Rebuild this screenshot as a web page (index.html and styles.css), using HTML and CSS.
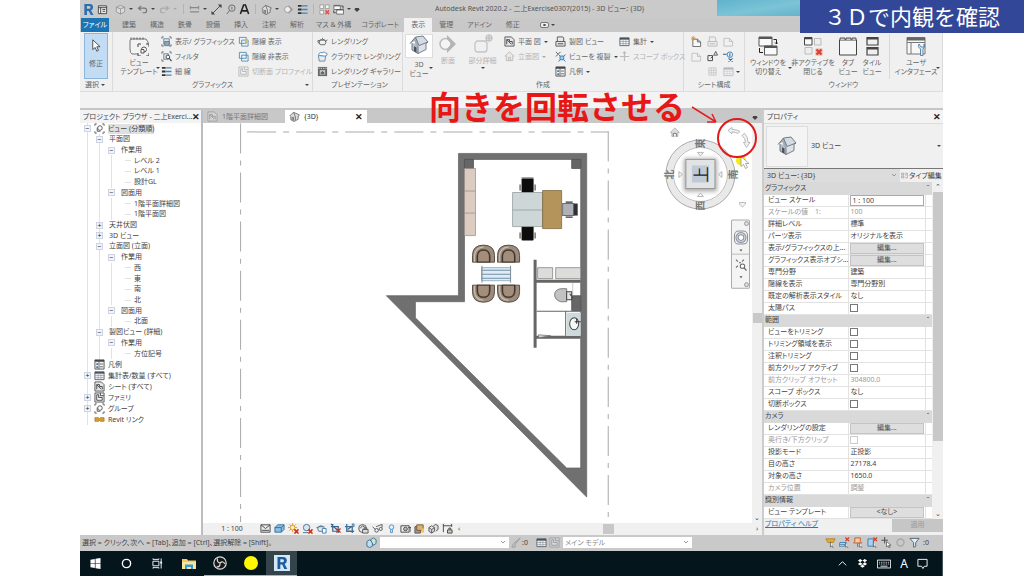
FILE: index.html
```html
<!DOCTYPE html>
<html lang="ja">
<head>
  <meta charset="UTF-8">
  <title>Autodesk Revit 2020.2 - 3D ビュー</title>
  <link rel="stylesheet" href="styles.css">
</head>
<body>

<svg class="defs" aria-hidden="true">
  <symbol id="i-r" viewBox="0 0 12 12"><path d="M1.500 12V0h6Q11 0 11 3.800q0 2.400-2.300 3.200L11.500 12h-3L6.200 7.500H4.300V12zM4.300 2.300v3h2.300q1.600 0 1.600-1.500T6.600 2.300z" fill="#2c6fae"/></symbol>
  <symbol id="i-list" viewBox="0 0 12 12"><path d="M1.500 2h9v8.500h-9zM1.500 4h9M4 4v6.500M6 6h3M6 8h3" fill="#eee" stroke="#444"/></symbol>
  <symbol id="i-cube" viewBox="0 0 12 12"><path d="M1.500 3.500 6 1.500l4.500 2v5L6 11 1.500 8.500zM1.500 3.500 6 5.500l4.500-2M6 5.500V11" fill="#ddd" stroke="#888" stroke-width=".8"/></symbol>
  <symbol id="i-solid" viewBox="0 0 12 12"><path d="M1 5l3-2 3 2v4l-3 2-3-2zM1 5l3 2 3-2M4 7v4M6 3l2.500-1.500L11 3v4L8.500 9" fill="#ddd" stroke="#555"/></symbol>
  <symbol id="i-undo" viewBox="0 0 12 12"><path d="M4.500 2 1.500 4.500l3 2.500M1.500 4.500H8q2.500 0 2.500 2.500T8 9.500H6" fill="none" stroke="#777" stroke-width="1.200"/></symbol>
  <symbol id="i-redo" viewBox="0 0 12 12"><path d="M7.500 2l3 2.500-3 2.500M10.500 4.500H4Q1.500 4.500 1.500 7T4 9.500h2" fill="none" stroke="#aaa" stroke-width="1.200"/></symbol>
  <symbol id="i-measure" viewBox="0 0 12 12"><path d="M1 4h10M1 8.500h10" stroke="#888" stroke-width="1.400" fill="none"/><path d="M1.500 2v4M10.500 2v4" stroke="#888"/></symbol>
  <symbol id="i-constrain" viewBox="0 0 12 12"><path d="M1 3h10M1.500 1v9M10.500 1v3" stroke="#444" fill="none"/><path d="M6 7.500h5V11H6zM7.500 7V5.500h2V7" fill="#ccc" stroke="#444"/></symbol>
  <symbol id="i-dim" viewBox="0 0 12 12"><path d="M2 10l8-8" stroke="#444"/><path d="M.500 11.500V7.500l4 4zM11.500.500v4l-4-4z" fill="#444"/></symbol>
  <symbol id="i-tag" viewBox="0 0 12 12"><circle cx="7.500" cy="4.500" r="3.500" fill="none" stroke="#666"/><path d="M5 7l-3 4M7.500 3v3" stroke="#666"/></symbol>
  <symbol id="i-text" viewBox="0 0 12 12"><path d="M1.500 11 5 1h2l3.500 10M3.500 7.500h5" fill="none" stroke="#222" stroke-width="1.700"/></symbol>
  <symbol id="i-house" viewBox="0 0 12 12"><path d="M1 5 5 1.500 11 4v1l-1 .500V9l-4.500 2.500L2 9.500V6z" fill="#ddd" stroke="#555" stroke-width=".8"/><path d="M5 1.500 7 6.500V10M3.500 10V7h1.500v3.500" fill="none" stroke="#555" stroke-width=".8"/></symbol>
  <symbol id="i-section" viewBox="0 0 12 12"><circle cx="5" cy="6" r="3.300" fill="#eee" stroke="#999"/><path d="M6 1l5 5-5 5V9.500L9 6 6 2.500z" fill="#999"/></symbol>
  <symbol id="i-lines" viewBox="0 0 12 12"><path d="M1 2h4M1 6h4M1 10h4" stroke="#333" stroke-width="2"/><path d="M5.500 2h6M5.500 6h6M5.500 10h6" stroke="#4585b5" stroke-width="1.500"/></symbol>
  <symbol id="i-closex" viewBox="0 0 12 12"><path d="M1 1h4v4H1zM7 1h4v4H7zM1 7h4v4H1z" fill="#f4f4f4" stroke="#888" stroke-width=".7"/><path d="M7 7l4 4M11 7l-4 4" stroke="#dd5a48" stroke-width="1.700"/></symbol>
  <symbol id="i-switch" viewBox="0 0 12 12"><path d="M1 1.500h7V6H1zM4 6h7.500v5H4z" fill="#fafafa" stroke="#555" stroke-width=".8"/><path d="M1 2h7M4 6.500h7.500" stroke="#555"/><path d="M9 2.200h2V5M.800 7v2.500H3" fill="none" stroke="#222" stroke-width=".8"/></symbol>
  <symbol id="i-filter" viewBox="0 0 12 12"><path d="M1 3V1h2M9 1h2v2M11 9v2H9M3 11H1V9" fill="none" stroke="#666"/><path d="M3 3h6v6H3z" fill="#dbe4ec" stroke="#4d6c86" stroke-width=".8"/><path d="M4 6h5v4.500H4z" fill="#8fa9bd" stroke="#4d6c86" stroke-width=".8"/></symbol>
  <symbol id="i-find" viewBox="0 0 12 12"><path d="M1 3V1h2M9 1h2v2M3 11H1V9" fill="none" stroke="#666"/><path d="M3 3h5v6H3z" fill="#dbe4ec" stroke="#4d6c86" stroke-width=".8"/><circle cx="7.500" cy="6.500" r="2" fill="#fff" stroke="#444"/><path d="M9 8l2.500 3" stroke="#444" stroke-width="1.300"/></symbol>
  <symbol id="i-layers" viewBox="0 0 12 12"><path d="M1.500 1.500H9V8H1.500zM4 4.500h7V11H4z" fill="#eef4f8" stroke="#4682ae" stroke-width=".9"/><path d="M7.500 3.500h3.500v3.500H7.500z" fill="#e7b951"/></symbol>
  <symbol id="i-layers2" viewBox="0 0 12 12"><path d="M1.500 1.500H9V8H1.500zM4 4.500h7V11H4z" fill="#eef4f8" stroke="#4682ae" stroke-width=".9"/></symbol>
  <symbol id="i-teapot" viewBox="0 0 12 12"><path d="M3 4.500h6q1.500 3-.500 5h-5Q1.500 7.500 3 4.500zM3 5H1q-.500 3 2 3M9 6.500 11.500 4M3.500 4.500q2.500-2 5 0M5.500 2.500h1" fill="none" stroke="#555" stroke-width=".9"/></symbol>
  <symbol id="i-cloud" viewBox="0 0 12 12"><path d="M1.500 5h8l-1 6h-6z" fill="#e6eef5" stroke="#5a7893" stroke-width=".9"/><path d="M3 5Q1 4 2.500 2.500 4 1 5.500 2 8 0 9 2q2.500 0 2 2t-3 1.500z" fill="#fff" stroke="#3d7cb0" stroke-width=".9"/></symbol>
  <symbol id="i-gallery" viewBox="0 0 12 12"><path d="M1 1h10v10H1z" fill="#666"/><path d="M1.500 2.500h9" stroke="#ddd" stroke-dasharray="1.500 1"/><path d="M3 4.500h6v5H3z" fill="#ccc"/><path d="M4 9V7l2-1.500L8 7v2z" fill="#666"/></symbol>
  <symbol id="i-plan" viewBox="0 0 12 12"><path d="M1 1h7l3 3v7H1z" fill="#e4e7ea" stroke="#555"/><path d="M3 9V4h3v2h3v3M3 4l5 5" fill="none" stroke="#444"/></symbol>
  <symbol id="i-elev" viewBox="0 0 12 12"><path d="M6 1l5 4.500H9.500v5h-7v-5H1z" fill="#e8e8e8" stroke="#bbb"/><path d="M5 10.500V7h2v3.500" stroke="#bbb" fill="none"/></symbol>
  <symbol id="i-draft" viewBox="0 0 12 12"><path d="M1 6h10v5H1zM2.500 6V1h6l1 1v4" fill="#e8e8e8" stroke="#555"/><path d="M3 8.500h6" stroke="#444"/></symbol>
  <symbol id="i-dup" viewBox="0 0 12 12"><path d="M1 1l2.500 2.500M6 1 3.500 3.500M1 6l2.500-2.500" stroke="#555" fill="none"/><path d="M5.500 5.500h4v4h-4zM4 4l1.500 1.500M11.500 4 9.500 5.500M4 11.500l1.500-2M11.500 11.500l-2-2" fill="#a9cde6" stroke="#2e7db8"/></symbol>
  <symbol id="i-table" viewBox="0 0 12 12"><path d="M1 2h10v8.500H1z" fill="#f3f5f7" stroke="#5b6168"/><path d="M1 3h10" stroke="#48505a" stroke-width="2"/><path d="M4.500 3v7M7.500 3v7M1 6h10M1 8.300h10" stroke="#8c949c" stroke-width=".7"/></symbol>
  <symbol id="i-legend" viewBox="0 0 12 12"><path d="M1 1h10v10H1z" fill="#f3f5f7" stroke="#555"/><path d="M1 2h10" stroke="#444" stroke-width="2"/><path d="M2.500 4.500h2v2h-2zM2.500 8h2v2h-2z" fill="#51758f"/><path d="M5.500 1v10M6.500 5.500H10M6.500 8.500H10" stroke="#555" stroke-width=".9"/></symbol>
  <symbol id="i-scope" viewBox="0 0 12 12"><path d="M6 1v10M1 6h10M4.500 2.500 6 1l1.500 1.500" fill="none" stroke="#bbb" stroke-width="1.300"/></symbol>
  <symbol id="i-sheet" viewBox="0 0 12 12"><path d="M1 2.500h6l3.500 3.500v5H1zM7 2.500V6h3.500" fill="#f4f4f4" stroke="#666"/></symbol>
  <symbol id="i-newsheet" viewBox="0 0 12 12"><path d="M2 3.500h5l3.500 3v5H2zM7 3.500v3h3.500" fill="#f8f8f8" stroke="#666"/><path d="M2.500 0v5M0 2.500h5M.800.800l3.400 3.400M4.200.800.800 4.200" stroke="#e2922c" stroke-width=".9"/></symbol>
  <symbol id="i-rev" viewBox="0 0 12 12"><path d="M1 5h5v5.500H1zM4 8l3-3" fill="none" stroke="#444"/><path d="M7.500 4.500 9.500.500l2 4z" fill="none" stroke="#444" stroke-width=".9"/></symbol>
  <symbol id="i-guide" viewBox="0 0 12 12"><circle cx="7.500" cy="4" r="3" fill="#e6f0f7" stroke="#3980b5"/><path d="M0 3.500h4M7.500 2.500V6M6 8l4.500 3.500M10.500 8 6 11.500" stroke="#335f85" stroke-width="1.100"/></symbol>
  <symbol id="i-grid" viewBox="0 0 12 12"><path d="M2 2h8v8H2zM4.700 2v8M7.300 2v8M2 4.700h8M2 7.300h8" fill="none" stroke="#ccc"/></symbol>
  <symbol id="i-template" viewBox="0 0 20 20"><path d="M3 3h14l2 3v12H3q-2-1-2-5V5q0-2 2-2z" fill="#f2f3f5" stroke="#777"/><path d="M2 3.500V1.500M5 3.500V1.500M8 3.500V1.500M11 3.500V1.500M14 3.500V1.500" fill="none" stroke="#555"/><path d="M9 8h11v12H9z" fill="#f2f2f2"/><path d="M9 11V8h3M17 8h3v3M20 17v3h-3M12 20H9v-3" fill="none" stroke="#444"/><circle cx="15" cy="13.500" r="2.500" fill="#fff" stroke="#555"/><path d="M12 13.500h3v3.500h-3z" fill="#fff" stroke="#555"/></symbol>
  <symbol id="i-house3d" viewBox="0 0 20 20"><path d="M3 8v7l6 3.500V9.500z" fill="#b9bfc6"/><path d="M9 9v9.500l8-4V8z" fill="#dce2ea"/><path d="M1 8.500 6.500 2 10 9.500 7 11 5.500 6z" fill="#a5acb5"/><path d="M6.500 2 14 1l5 6-9 3.500z" fill="#d4dbe4"/><path d="M1 8.500 6.500 2 14 1l5 6-2 1v6.500l-8 4L3 15V8M6.500 2 10 10.500 19 7M9 10.500v8" fill="none" stroke="#69727d" stroke-width=".9"/><path d="M5 16.300v-5l2.500 1.200v5z" fill="#4a525d"/></symbol>
  <symbol id="i-bigsection" viewBox="0 0 20 20"><circle cx="7.500" cy="10" r="5.500" fill="#f4f4f4" stroke="#bcbcbc" stroke-width="1.500"/><path d="M9 1l9 9-9 9v-4l4.500-5L9 5z" fill="#b4b4b4"/></symbol>
  <symbol id="i-callout" viewBox="0 0 20 20"><path d="M4 7h7q3 0 3 3v5q0 3-3 3H5q-3 0-3-3V9zM12 8l2-3" fill="none" stroke="#c4c4c4" stroke-width="1.300"/><circle cx="16" cy="4" r="3.200" fill="#ddd" stroke="#bbb"/><path d="M13 4h6M16 1v6" stroke="#bbb"/></symbol>
  <symbol id="i-bigswitch" viewBox="0 0 20 20"><path d="M1 1h13v9H1zM6.500 10H19v9H6.500z" fill="#fafafa" stroke="#555"/><path d="M1 2h13M6.500 11H19" stroke="#555" stroke-width="2"/><path d="M15.500 3.500h3V8M17 6.500 18.500 8 20 6.500M1.500 12v4.500h3.500" fill="none" stroke="#222"/></symbol>
  <symbol id="i-bigclose" viewBox="0 0 20 20"><path d="M1.500 1.500H9V9H1.500z" fill="#fafafa" stroke="#444"/><path d="M11.500 2.500H18V9h-6.500zM2 11.500h7V18H2z" fill="#eee" stroke="#bbb"/><path d="M1.500 2.500H9" stroke="#444" stroke-width="1.500"/><path d="M12.500 12.500h7v7h-7z" fill="#f2ada3"/><path d="M13.500 13.500l5 5M18.500 13.500l-5 5" stroke="#d8402d" stroke-width="2"/></symbol>
  <symbol id="i-tabview" viewBox="0 0 20 20"><path d="M1.500 4h17v15h-17z" fill="#f6f6f6" stroke="#444"/><path d="M2 4V2h5v2M8 4V2h5v2M14 4V2h4v2" fill="#ccc" stroke="#555"/></symbol>
  <symbol id="i-tileview" viewBox="0 0 20 20"><path d="M5 1.500h11v7.500H5zM5 11.500h11V19H5z" fill="#eee" stroke="#444" stroke-width="1.200"/><path d="M5 2.500h11M5 12.500h11" stroke="#444" stroke-width="2"/></symbol>
  <symbol id="i-ui" viewBox="0 0 20 20"><path d="M1 1.500h18V18H1z" fill="#f7f7f7" stroke="#777"/><path d="M1 3h18" stroke="#666" stroke-width="3"/><path d="M1 6.500h18M5 6.500V18" stroke="#777"/><path d="M13 8q-2 3 1.500 5v6.500h2.500V13q3-2 1-5v3h-3z" fill="#d8e8f4" stroke="#3d7199" stroke-width=".8"/></symbol>
  <symbol id="i-arrow" viewBox="0 0 12 16"><path d="M2 1l9 8.500H7L9 14l-2 1-2-4.500L2 13z" fill="#fff" stroke="#333"/></symbol>
  <symbol id="i-views" viewBox="0 0 12 12"><path d="M1 3V1h2M9 1h2v2M11 9v2H9M3 11H1V9" fill="none" stroke="#555"/><circle cx="6.500" cy="5.500" r="2.500" fill="none" stroke="#555"/><path d="M3.500 5v4H7" fill="none" stroke="#555"/></symbol>
  <symbol id="i-family" viewBox="0 0 12 12"><path d="M1 1h10v10H1z" fill="#e9edf1" stroke="#555"/><path d="M3 9V3h2v3h4v3zM7 1v3h4" fill="#fff" stroke="#444"/></symbol>
  <symbol id="i-link" viewBox="0 0 12 12"><path d="M1 4h4l1 1 1-1h4v4H7L6 7 5 8H1z" fill="#d19d35" stroke="#a97818" stroke-width=".8"/></symbol>
  <symbol id="i-detail" viewBox="0 0 12 12"><path d="M1 2h10v8H1z" fill="#eee" stroke="#444"/><path d="M1 2l5 4 5-4M2 8h8" stroke="#444" fill="none"/></symbol>
  <symbol id="i-box" viewBox="0 0 12 12"><path d="M1 5l3-3h7v5l-3 3H1z" fill="#8ec0e4" stroke="#2e6f9f"/><path d="M1 5h7v5M8 5l3-3" fill="none" stroke="#2e6f9f"/></symbol>
  <symbol id="i-sun" viewBox="0 0 12 12"><path d="M5 0v10M0 5h10M1.500 1.500l7 7M8.500 1.500l-7 7" stroke="#dc9a23"/><circle cx="5" cy="5" r="2.500" fill="#fff2be" stroke="#dc9a23"/><path d="M7 7l4.500 4.500M11.500 7 7 11.500" stroke="#cf2e1c" stroke-width="1.700"/></symbol>
  <symbol id="i-shadow" viewBox="0 0 12 12"><circle cx="5" cy="5" r="3.500" fill="#d6e7f4" stroke="#467391"/><path d="M1 10.500h6" stroke="#467391"/><path d="M7 7l4.500 4.500M11.500 7 7 11.500" stroke="#cf2e1c" stroke-width="1.700"/></symbol>
  <symbol id="i-render" viewBox="0 0 12 12"><path d="M2.500 4h6q1.500 3-.500 5h-5Q1 7 2.500 4zM2.500 5H.500M3 4q2.500-2 5 0" fill="#e1e8ee" stroke="#55738c"/><path d="M7 6h4v5H7z" fill="#fff" stroke="#3f7eaf"/></symbol>
  <symbol id="i-crop" viewBox="0 0 12 12"><path d="M1 4h8v7M3 1v8h8M4 7l4-3" fill="none" stroke="#3f6f97" stroke-width="1.400"/><path d="M9 1h2v3H9z" fill="#9fc4e0" stroke="#3f6f97" stroke-width=".8"/></symbol>
  <symbol id="i-cropx" viewBox="0 0 12 12"><path d="M1 4h8v7M3 1v8h8M1 1l7 7" fill="none" stroke="#33648e" stroke-width="1.300"/><path d="M7 6l4.500 4.500M11.500 6 7 10.500" stroke="#cf2e1c" stroke-width="1.300"/></symbol>
  <symbol id="i-lock" viewBox="0 0 12 12"><circle cx="5" cy="6" r="4.300" fill="#eee" stroke="#555"/><path d="M2 6 5 3l4 3M5 7h6v4H5zM6.500 7V5.500h3V7" fill="#ddd" stroke="#555"/></symbol>
  <symbol id="i-glasses" viewBox="0 0 12 12"><path d="M.500 4l3 3M4.500 4 11 1.500V5" stroke="#555" fill="none"/><circle cx="5" cy="8" r="2" fill="none" stroke="#555"/><circle cx="9.500" cy="6.500" r="1.700" fill="none" stroke="#555"/></symbol>
  <symbol id="i-bulb" viewBox="0 0 12 12"><circle cx="6" cy="4.500" r="2.500" fill="#e4f2fb" stroke="#4b8fc2"/><path d="M5 7v3.500h2V7" fill="none" stroke="#4b8fc2"/></symbol>
  <symbol id="i-camera" viewBox="0 0 12 12"><path d="M1 3h9v7H1z" fill="#eee" stroke="#444"/><circle cx="6" cy="6.500" r="2" fill="#bbb" stroke="#444"/><path d="M9 5h3v5" fill="none" stroke="#444"/></symbol>
  <symbol id="i-color" viewBox="0 0 12 12"><path d="M1 4h6v7H1z" fill="#999" stroke="#555"/><path d="M3 2h7v6H3z" fill="#d8b078" stroke="#755c38"/><path d="M8 6h3v4.500H8z" fill="#f5c64f"/></symbol>
  <symbol id="i-person" viewBox="0 0 12 12"><path d="M1 5l3-2 3 2v5l-3 1.500L1 10z" fill="#c5dded" stroke="#38719d"/><path d="M5 3l3-2 3 2v4L8 9z" fill="#cfe8c8" stroke="#38719d"/></symbol>
  <symbol id="i-pen" viewBox="0 0 12 12"><path d="M1 11l2-4 7-6-1 1.500L4.500 8v3z" fill="#ccc" stroke="#999"/></symbol>
  <symbol id="i-cursorx" viewBox="0 0 12 12"><path d="M1 2h6v8H1z" fill="#a9d0ec" stroke="#3f7eaf"/><path d="M7 5v6l1.500-1.500L10 12" fill="#fff" stroke="#555" stroke-width=".8"/><path d="M7 .500l4 4M11 .500l-4 4" stroke="#d23e2b" stroke-width="1.400"/></symbol>
  <symbol id="i-underlayx" viewBox="0 0 12 12"><path d="M1 6h7l-2 4H0zM1 8h7" fill="#d5e4ef" stroke="#3f7eaf"/><path d="M7 .500l4 4M11 .500l-4 4" stroke="#d23e2b" stroke-width="1.400"/><path d="M7 6v5l1.500-1 1.500 2" fill="#fff" stroke="#555" stroke-width=".8"/></symbol>
  <symbol id="i-cursorlink" viewBox="0 0 12 12"><path d="M1 2h10L9 6H3z" fill="#e2ac3d" stroke="#b58527"/><path d="M6 5v6l1.500-1.500L9 12" fill="#fff" stroke="#555" stroke-width=".8"/></symbol>
  <symbol id="i-pin" viewBox="0 0 12 12"><path d="M2 1h6v4l1.500 1.500h-9L2 5zM5 6.500V11" fill="#f5cf9c" stroke="#c05a36"/><path d="M7 6v5l1.500-1 1.500 2" fill="#fff" stroke="#555" stroke-width=".8"/></symbol>
  <symbol id="i-drag" viewBox="0 0 12 12"><path d="M4 0v7M.500 3.500h7" stroke="#444"/><path d="M6 5v6l1.500-1.500L9 12l1-.500-1.500-2.500H11z" fill="#fff" stroke="#555" stroke-width=".8"/></symbol>
  <symbol id="i-ring" viewBox="0 0 12 12"><circle cx="6" cy="6" r="3.800" fill="none" stroke="#aaa" stroke-width="1.600"/></symbol>
  <symbol id="i-funnel" viewBox="0 0 12 12"><path d="M1 1.500h10L7.300 6v4.500L5 11V6z" fill="#e6eef4" stroke="#4b6175"/></symbol>
  <symbol id="i-typeedit" viewBox="0 0 12 12"><path d="M1 2h4v3H1zM1 7h4v3H1zM7 2h4v8H7M7 5h3" fill="none" stroke="#888"/></symbol>
  <symbol id="i-win" viewBox="0 0 12 12"><path d="M.500 1.800 5.300 1v4.700H.500zM6 .900l5.500-.9v5.700H6zM.500 6.400h4.800V11l-4.800-.8zM6 6.400h5.500V12L6 11.100z" fill="#fff"/></symbol>
  <symbol id="i-cortana" viewBox="0 0 12 12"><circle cx="6" cy="6" r="4.500" fill="none" stroke="#fff" stroke-width="1.500"/></symbol>
  <symbol id="i-task" viewBox="0 0 12 12"><path d="M1 3.500h6.500v5H1zM1 .500v1h6.500v-1M1 11.500v-1h6.500v1M10 .500v11" fill="none" stroke="#fff"/><path d="M9 4h2v2H9z" fill="#fff"/></symbol>
  <symbol id="i-folder" viewBox="0 0 14 12"><path d="M0 1h5l1 1.500h8V11H0z" fill="#f0cb68"/><path d="M0 4h14v7H0z" fill="#fae39a"/><path d="M3 6.500h8V11H9V9H5v2H3z" fill="#3a9ad6"/></symbol>
  <symbol id="i-obs" viewBox="0 0 14 14"><circle cx="7" cy="7" r="6.200" fill="#191919" stroke="#ddd" stroke-width="1.200"/><path d="M7 7Q3.500 6 4.500 2.500M7 7q3-2.500 5 1M7 7q.500 4-3.500 4" fill="none" stroke="#ddd" stroke-width="1.200"/></symbol>
  <symbol id="i-yellow" viewBox="0 0 14 14"><circle cx="7" cy="7" r="7" fill="#fff800"/></symbol>
  <symbol id="i-revit" viewBox="0 0 16 16"><path d="M0 0h16v16H0z" fill="#d3e7f6"/><path d="M3.500 14V2h5.700q3.600 0 3.600 3.700 0 2.300-2.200 3.200l2.700 5.100h-3L8.200 9.500H6.300V14zM6.300 4.300v3h2.200q1.500 0 1.500-1.500t-1.500-1.500z" fill="#1c5b9c"/></symbol>
  <symbol id="i-up" viewBox="0 0 12 12"><path d="M2 8l4-4 4 4" fill="none" stroke="#fff"/></symbol>
  <symbol id="i-dropbox" viewBox="0 0 12 12"><path d="M3.500 1 6 2.800 3.500 4.600 1 2.800zM8.500 1 11 2.800 8.500 4.600 6 2.800zM3.500 4.700 6 6.500 3.500 8.200 1 6.500zM8.500 4.700 11 6.500 8.500 8.200 6 6.500zM6 7.200l2.400 1.800L6 10.700 3.600 9z" fill="#fff"/></symbol>
  <symbol id="i-keyboard" viewBox="0 0 16 12"><path d="M.500 1.500h15v9H.500z" fill="none" stroke="#fff"/><path d="M2.500 4h11M2.500 6h11" stroke="#fff" stroke-dasharray="1 1"/><path d="M4 8.500h8" stroke="#fff"/></symbol>
  <symbol id="i-note" viewBox="0 0 12 12"><path d="M1 1.500h10v7.500H8l-1.500 2.500L5 9H1z" fill="none" stroke="#fff"/></symbol>
</svg>

<div class="app">

  <header class="quick-bar">
    <button aria-label="Revit"><svg class="icon"><use href="#i-r"/></svg></button>
    <button aria-label="メニュー"><svg class="icon"><use href="#i-list"/></svg></button>
    <span class="gap-small"></span>
    <button aria-label="保存"><svg class="icon"><use href="#i-cube"/></svg></button><i class="caret"></i>
    <button aria-label="元に戻す"><svg class="icon"><use href="#i-undo"/></svg></button><i class="caret"></i>
    <button aria-label="やり直し"><svg class="icon"><use href="#i-redo"/></svg></button><i class="caret dim"></i>
    <span class="bar-sep"></span>
    <button aria-label="計測"><svg class="icon"><use href="#i-measure"/></svg></button><i class="caret"></i>
    <button aria-label="寸法"><svg class="icon"><use href="#i-dim"/></svg></button>
    <button aria-label="タグ"><svg class="icon"><use href="#i-tag"/></svg></button>
    <button aria-label="文字"><svg class="icon"><use href="#i-text"/></svg></button>
    <span class="bar-sep"></span>
    <button aria-label="3D"><svg class="icon"><use href="#i-house"/></svg></button><i class="caret"></i>
    <button aria-label="断面"><svg class="icon"><use href="#i-section"/></svg></button>
    <button aria-label="細線"><svg class="icon"><use href="#i-lines"/></svg></button>
    <span class="bar-sep"></span>
    <button aria-label="閉じる"><svg class="icon"><use href="#i-closex"/></svg></button>
    <button aria-label="切り替え"><svg class="icon"><use href="#i-switch"/></svg></button><i class="caret"></i>
    <i class="caret lined"></i>
    <span class="app-title">Autodesk Revit 2020.2 - 二上Exercise0307(2015) - 3D ビュー: {3D}</span>
    <span class="wallpaper"></span>
  </header>

  <nav class="tabs">
    <button class="file">ファイル</button>
    <button>建築</button>
    <button>構造</button>
    <button>鉄骨</button>
    <button>設備</button>
    <button>挿入</button>
    <button>注釈</button>
    <button>解析</button>
    <button class="wide">マス &amp; 外構</button>
    <button class="wide">コラボレート</button>
    <button class="active">表示</button>
    <button>管理</button>
    <button>アドイン</button>
    <button>修正</button>
    <button class="panel-mode" aria-label="リボン表示"><span class="mode-box"></span><i class="caret"></i></button>
  </nav>

  <section class="ribbon">
    <div class="group select-group">
      <div class="group-body">
        <button class="big modify"><svg class="cursor"><use href="#i-arrow"/></svg><span>修正</span></button>
      </div>
      <div class="group-label">選択 <i class="caret"></i></div>
    </div>

    <div class="group graphics-group">
      <div class="group-body">
        <button class="big"><svg class="icon-big"><use href="#i-template"/></svg><span>ビュー<br>テンプレート</span><i class="caret corner"></i></button>
        <div class="stack">
          <button><svg class="icon"><use href="#i-filter"/></svg>表示/ グラフィックス</button>
          <button><svg class="icon"><use href="#i-find"/></svg>フィルタ</button>
          <button><svg class="icon"><use href="#i-lines"/></svg>細 線</button>
        </div>
        <div class="stack">
          <button><svg class="icon"><use href="#i-layers"/></svg>隠線 表示</button>
          <button><svg class="icon"><use href="#i-layers2"/></svg>隠線 非表示</button>
          <button disabled><svg class="icon faded"><use href="#i-family"/></svg>切断面 プロファイル</button>
        </div>
      </div>
      <div class="group-label">グラフィックス<i class="caret launcher"></i></div>
    </div>

    <div class="group present-group">
      <div class="group-body">
        <div class="stack">
          <button><svg class="icon"><use href="#i-teapot"/></svg>レンダリング</button>
          <button><svg class="icon"><use href="#i-cloud"/></svg>クラウドで レンダリング</button>
          <button><svg class="icon"><use href="#i-gallery"/></svg>レンダリング ギャラリー</button>
        </div>
      </div>
      <div class="group-label">プレゼンテーション</div>
    </div>

    <div class="group create-group">
      <div class="group-body">
        <button class="big"><span class="lit"><svg class="icon-big"><use href="#i-house3d"/></svg></span><span>3D<br>ビュー</span><i class="caret corner"></i></button>
        <button class="big" disabled><svg class="icon-big"><use href="#i-bigsection"/></svg><span>断面</span></button>
        <button class="big" disabled><svg class="icon-big"><use href="#i-callout"/></svg><span>部分詳細</span><i class="caret"></i></button>
        <div class="stack">
          <button><svg class="icon"><use href="#i-plan"/></svg>平面 図<i class="caret"></i></button>
          <button disabled><svg class="icon"><use href="#i-elev"/></svg>立面図<i class="caret dim"></i></button>
        </div>
        <div class="stack">
          <button><svg class="icon"><use href="#i-draft"/></svg>製図 ビュー</button>
          <button><svg class="icon"><use href="#i-dup"/></svg>ビューを 複製<i class="caret"></i></button>
          <button><svg class="icon"><use href="#i-legend"/></svg>凡例<i class="caret"></i></button>
        </div>
        <div class="stack">
          <button><svg class="icon"><use href="#i-table"/></svg>集計<i class="caret"></i></button>
          <button disabled><svg class="icon"><use href="#i-scope"/></svg>スコープ ボックス</button>
        </div>
      </div>
      <div class="group-label">作成</div>
    </div>

    <div class="group sheet-group">
      <div class="group-body">
        <button aria-label="シート"><svg class="icon"><use href="#i-newsheet"/></svg></button>
        <button aria-label="ビュー" disabled><svg class="icon faded"><use href="#i-draft"/></svg></button>
        <button aria-label="図枠" disabled><svg class="icon faded"><use href="#i-sheet"/></svg></button>
        <button aria-label="複製" disabled><svg class="icon faded"><use href="#i-sheet"/></svg></button>
        <button aria-label="改訂"><svg class="icon"><use href="#i-rev"/></svg></button>
        <button aria-label="マッチライン"><svg class="icon"><use href="#i-guide"/></svg></button>
        <span></span>
        <button aria-label="ガイド グリッド" disabled><svg class="icon"><use href="#i-grid"/></svg></button>
        <button class="viewport" aria-label="ビューポート" disabled><svg class="icon faded"><use href="#i-table"/></svg><i class="caret"></i></button>
      </div>
      <div class="group-label">シート構成</div>
    </div>

    <div class="group window-group">
      <div class="group-body">
        <button class="big"><svg class="icon-big"><use href="#i-bigswitch"/></svg><span>ウィンドウを<br>切り替え</span><i class="caret corner"></i></button>
        <button class="big"><svg class="icon-big"><use href="#i-bigclose"/></svg><span>非アクティブを<br>閉じる</span></button>
        <button class="big"><svg class="icon-big"><use href="#i-tabview"/></svg><span>タブ<br>ビュー</span></button>
        <button class="big"><svg class="icon-big"><use href="#i-tileview"/></svg><span>タイル<br>ビュー</span></button>
        <button class="big split"><svg class="icon-big"><use href="#i-ui"/></svg><span>ユーザ<br>インタフェース</span><i class="caret corner"></i></button>
      </div>
      <div class="group-label">ウィンドウ</div>
    </div>
  </section>

  <div class="options-bar"></div>

  <main class="workspace">
    <aside class="browser">
      <div class="panel-title"><span>プロジェクト ブラウザ - 二上Exerci...</span><button class="close" aria-label="閉じる">✕</button></div>
      <ul class="tree">
        <li class="top"><button>−</button><svg class="icon"><use href="#i-views"/></svg><span class="current">ビュー (分類順)</span></li>
        <li class="l1"><button>−</button>平面図</li>
        <li class="l2"><button>−</button>作業用</li>
        <li class="l3">レベル 2</li>
        <li class="l3">レベル 1</li>
        <li class="l3">設計GL</li>
        <li class="l2"><button>−</button>図面用</li>
        <li class="l3">1階平面詳細図</li>
        <li class="l3">1階平面図</li>
        <li class="l1"><button>+</button>天井伏図</li>
        <li class="l1"><button>+</button>3D ビュー</li>
        <li class="l1"><button>−</button>立面図 (立面)</li>
        <li class="l2"><button>−</button>作業用</li>
        <li class="l3">西</li>
        <li class="l3">東</li>
        <li class="l3">南</li>
        <li class="l3">北</li>
        <li class="l2"><button>−</button>図面用</li>
        <li class="l3">北面</li>
        <li class="l1"><button>−</button>製図ビュー (詳細)</li>
        <li class="l2"><button>−</button>作業用</li>
        <li class="l3">方位記号</li>
        <li class="top leaf"><svg class="icon"><use href="#i-legend"/></svg>凡例</li>
        <li class="top"><button>+</button><svg class="icon"><use href="#i-table"/></svg>集計表/数量 (すべて)</li>
        <li class="top leaf"><svg class="icon"><use href="#i-plan"/></svg>シート (すべて)</li>
        <li class="top"><button>+</button><svg class="icon"><use href="#i-family"/></svg>ファミリ</li>
        <li class="top"><button>+</button><svg class="icon"><use href="#i-views"/></svg>グループ</li>
        <li class="top leaf"><svg class="icon"><use href="#i-link"/></svg>Revit リンク</li>
      </ul>
    </aside>

    <section class="viewer">
      <div class="view-tabs">
        <button><svg class="icon faded"><use href="#i-plan"/></svg>1階平面詳細図</button>
        <button class="active"><svg class="icon"><use href="#i-house"/></svg>{3D}<b class="close">✕</b></button>
        <i class="caret lined"></i>
      </div>
      <div class="canvas-row">
        <svg class="drawing" viewBox="203 124 548 398" role="img" aria-label="3D ビュー">
          <defs>
            <g id="sofa">
              <path d="M-11 8.500V2Q-11-8.500 0-8.500T11 2v6.500H6.500V3Q6.500-4 0-4T-6.500 3v5.500z" fill="#9d8b7b" stroke="#4e443c" stroke-width=".9"/>
              <path d="M-9 8V2Q-8-6.500 0-6.500" fill="none" stroke="#c9bcad" stroke-width="1.200"/>
              <path d="M-6 8.500V3Q-6-3.500 0-3.500T6 3v5.500z" fill="#a38d7b" stroke="#3e352e" stroke-width="1.200"/>
            </g>
            <g id="blackchair">
              <rect x="-6" y="-7" width="12" height="14" rx="1" fill="#0c0c0c"/>
              <path d="M-7.500-1v6M7.500-1v6M-6-7.500h12" stroke="#555" stroke-width="1.200"/>
            </g>
            <filter id="cubeglow" x="-50%" y="-50%" width="200%" height="200%"><feGaussianBlur stdDeviation="2"/></filter>
          </defs>

          <!-- section box -->
          <g fill="none" stroke="#aaa" stroke-width="1">
            <path d="M240.500 124v398M607.500 132v390" stroke-dasharray="30 7 5 7"/>
            <path d="M247 132.500h361" stroke-dasharray="29 7 6 7"/>
          </g>

          <!-- walls -->
          <path d="M458 154H586V497L386 296H458zM464 160V302H415V318L566 468H580V160z" fill="#707070" fill-rule="evenodd" stroke="#606060" stroke-width=".7"/>
          <path d="M464 160h9v9h-9zM571 160h9v9h-9zM571 296h9v15h-9z" fill="#666" stroke="#4a4a4a" stroke-width=".7"/>

          <!-- shelf and desks -->
          <path d="M464 169h11v67h-11zM464 191.500h11M464 213.500h11" fill="#dccbc0" stroke="#968a82" stroke-width=".7"/>
          <use href="#blackchair" x="527" y="186"/>
          <use href="#blackchair" x="527" y="234"/>
          <path d="M512 193h30v34h-30zM512 210.500h30" fill="#ced7d8" stroke="#899394" stroke-width=".7"/>
          <path d="M542 191h19v38h-19z" fill="#b5945b" stroke="#755c33" stroke-width=".7"/>
          <path d="M562 204h11v12h-11z" fill="#aeb2b8" stroke="#6b6e73"/>
          <path d="M565 202.500h7M565 217.500h7" stroke="#333" stroke-width="1.300"/>
          <path d="M573 204h4v12h-4z" fill="#2d3036"/>

          <!-- lounge -->
          <use href="#sofa" x="483" y="254"/>
          <use href="#sofa" x="508" y="254"/>
          <use href="#sofa" transform="translate(483 294) scale(1 -1)"/>
          <use href="#sofa" transform="translate(508 294) scale(1 -1)"/>
          <path d="M481 268h29v13h-29z" fill="#ddecf6" stroke="#8ba2b5" stroke-width=".8"/>
          <path d="M481 270.500h29M481 274.500h29M481 278.500h29" stroke="#718ea7"/>
          <path d="M481.500 266v17M510 266v17" stroke="#848f99"/>

          <!-- wet area -->
          <path d="M533 260h3v88h-3zM536 280h44v3h-44zM536 336h44v3h-44z" fill="#666"/>
          <path d="M536 311.500h44M565 312v24" stroke="#666"/>
          <path d="M537 268h15v11h-15zM555 268h25v11h-25z" fill="#dcddda" stroke="#777" stroke-width=".7"/>
          <path d="M572 283v13" stroke="#aaa" stroke-width=".6"/>
          <path d="M566 289h-6q-6 1-6 6t6 7h6z" fill="#c2c2c2" stroke="#666" stroke-width=".8"/>
          <path d="M566 292h5v8h-5zM569 294l3 4" fill="#e5e5e5" stroke="#444"/>
          <path d="M566 313h14v23h-14z" fill="#cddadb"/>
          <ellipse cx="573.500" cy="324" rx="4.500" ry="6" fill="#f7f7f7" stroke="#444"/>
          <path d="M574 322h6M576 319v5" stroke="#333"/>
          <path d="M538 335l12 1-12 2z" fill="#ddd" stroke="#666" stroke-width=".7"/>

          <!-- view cube -->
          <circle cx="699.500" cy="175" r="31" fill="none" stroke="#e9e9e9" stroke-width="7"/>
          <circle cx="699.500" cy="175" r="34.500" fill="none" stroke="#999" stroke-width=".8"/>
          <circle cx="699.500" cy="175" r="27" fill="none" stroke="#aaa" stroke-width=".8"/>
          <rect x="683" y="159" width="33" height="33" fill="#aaa" filter="url(#cubeglow)"/>
          <rect x="685" y="160" width="29" height="29" fill="#e2e3e5" stroke="#999"/>
          <rect x="691" y="166" width="17" height="17" fill="#c0cad6"/>
          <text class="cube-face" transform="translate(706 175) rotate(-90)">上</text>
          <g class="compass">
            <text transform="translate(703 144) rotate(-90)">東</text>
            <text transform="translate(672 175) rotate(-90)">北</text>
            <text transform="translate(736 175) rotate(-90)">南</text>
            <text transform="translate(703 206) rotate(-90)">西</text>
          </g>
          <g fill="#f3f3f3" stroke="#aaa" stroke-width=".8">
            <path d="M696.500 153h6l-3 3.500zM696.500 197h6l-3-3.500zM678 172v6l3.500-3zM721 172v6l-3.500-3z"/>
            <path d="M669.500 133l4.500-4.500 4.500 4.500H677v4h-6v-4z" fill="#ddd"/>
            <path d="M672.500 137v-3h3v3" stroke="#666"/>
            <path d="M738.500 203h6v1.500l-3 3-3-3z"/>
            <path d="M727 131l4-3v2q5 0 8 2l-2 2q-3-1.500-6-1.500v2z"/>
            <path d="M741 136l2.500-2q4 4 3.500 9h2l-3.500 5-3-5h2q0-4-3.500-7z"/>
          </g>

          <!-- navigation bar -->
          <rect x="730.500" y="220.500" width="18" height="68" rx="1" fill="#f4f4f4" stroke="#aaa"/>
          <path d="M730 254.500h19" stroke="#bbb"/>
          <circle cx="745.500" cy="224" r="2" fill="#ddd" stroke="#888" stroke-width=".8"/>
          <circle cx="745.500" cy="285" r="2" fill="#ddd" stroke="#888" stroke-width=".8"/>
          <rect x="733.500" y="231.500" width="13" height="13" rx="4" fill="#eceff2" stroke="#8c939b"/>
          <circle cx="740" cy="238" r="5" fill="#d4d9df" stroke="#8c939b"/>
          <circle cx="740" cy="238" r="2.800" fill="#fff" stroke="#8c939b"/>
          <path d="M738.500 250h3l-1.500 2zM738.500 276.500h3l-1.500 2z" fill="#555"/>
          <path d="M735 260l2 2M743 260l-2 2M735 268l2-2M738 263h2" stroke="#666"/>
          <circle cx="741.500" cy="266.500" r="2.200" fill="#fff" stroke="#666"/>
          <path d="M743 268l2.500 3" stroke="#666" stroke-width="1.300"/>

          <!-- pointer -->
          <circle cx="740" cy="161" r="5" fill="#f6e91d"/>
          <path d="M740 157v10l2.500-2 2 4 2-1-2-4h3.500z" fill="#fff" stroke="#999" stroke-width=".8"/>
        </svg>
        <div class="v-scroll"><span class="thumb"></span><span class="arrow">⌄</span></div>
      </div>
      <div class="view-bar">
        <button class="scale">1 : 100</button>
        <button aria-label="詳細レベル"><svg class="icon"><use href="#i-detail"/></svg></button>
        <button aria-label="表示スタイル"><svg class="icon"><use href="#i-box"/></svg></button>
        <button aria-label="太陽"><svg class="icon"><use href="#i-sun"/></svg></button>
        <button aria-label="影"><svg class="icon"><use href="#i-shadow"/></svg></button>
        <button aria-label="レンダリング"><svg class="icon"><use href="#i-render"/></svg></button>
        <button aria-label="トリミング"><svg class="icon"><use href="#i-cropx"/></svg></button>
        <button aria-label="トリミング領域"><svg class="icon"><use href="#i-crop"/></svg></button>
        <button aria-label="ロック"><svg class="icon"><use href="#i-lock"/></svg></button>
        <button aria-label="一時的に非表示"><svg class="icon"><use href="#i-glasses"/></svg></button>
        <button aria-label="非表示要素"><svg class="icon"><use href="#i-bulb"/></svg></button>
        <button aria-label="ビュー プロパティ"><svg class="icon"><use href="#i-camera"/></svg></button>
        <button aria-label="解析モデル"><svg class="icon"><use href="#i-color"/></svg></button>
        <button aria-label="変位"><svg class="icon"><use href="#i-solid"/></svg></button>
        <button aria-label="拘束"><svg class="icon"><use href="#i-constrain"/></svg></button>
        <span class="arrow">‹</span>
        <div class="h-scroll"><span class="thumb"></span></div>
        <span class="arrow">›</span>
      </div>
    </section>

    <aside class="properties">
      <div class="panel-title"><span>プロパティ</span><button class="close" aria-label="閉じる">✕</button></div>
      <button class="type-picker">
        <span class="preview"><svg><use href="#i-house3d"/></svg></span>
        <span class="type-name">3D ビュー</span><i class="caret"></i>
      </button>
      <div class="instance-row">
        <select aria-label="ビュー"><option>3D ビュー: {3D}</option></select>
        <button><svg class="icon"><use href="#i-typeedit"/></svg>タイプ編集</button>
      </div>
      <div class="prop-scroll">
        <table>
          <tbody>
            <tr class="section"><th colspan="2">グラフィックス</th><td>ˆ</td></tr>
            <tr><th><label for="scale">ビュー スケール</label></th><td><input id="scale" type="text" value="1 : 100"></td><td></td></tr>
            <tr class="off"><th>スケールの値&emsp;1:</th><td>100</td><td></td></tr>
            <tr><th>詳細レベル</th><td>標準</td><td></td></tr>
            <tr><th>パーツ表示</th><td>オリジナルを表示</td><td></td></tr>
            <tr><th>表示/グラフィックスの上...</th><td><button>編集...</button></td><td></td></tr>
            <tr><th>グラフィックス表示オプシ...</th><td><button>編集...</button></td><td></td></tr>
            <tr><th>専門分野</th><td>建築</td><td></td></tr>
            <tr><th>隠線を表示</th><td>専門分野別</td><td></td></tr>
            <tr><th>既定の解析表示スタイル</th><td>なし</td><td></td></tr>
            <tr><th><label for="sun">太陽パス</label></th><td><input id="sun" type="checkbox"></td><td></td></tr>
            <tr class="section"><th colspan="2">範囲</th><td>ˆ</td></tr>
            <tr><th><label for="crop">ビューをトリミング</label></th><td><input id="crop" type="checkbox"></td><td></td></tr>
            <tr><th><label for="region">トリミング領域を表示</label></th><td><input id="region" type="checkbox"></td><td></td></tr>
            <tr><th><label for="anno">注釈トリミング</label></th><td><input id="anno" type="checkbox"></td><td></td></tr>
            <tr><th><label for="clip">前方クリップ アクティブ</label></th><td><input id="clip" type="checkbox"></td><td></td></tr>
            <tr class="off"><th>前方クリップ オフセット</th><td>304800.0</td><td></td></tr>
            <tr><th>スコープ ボックス</th><td>なし</td><td></td></tr>
            <tr><th><label for="box">切断ボックス</label></th><td><input id="box" type="checkbox"></td><td></td></tr>
            <tr class="section"><th colspan="2">カメラ</th><td>ˆ</td></tr>
            <tr><th>レンダリングの設定</th><td><button>編集...</button></td><td></td></tr>
            <tr class="off"><th><label for="depth">奥行き/下方クリップ</label></th><td><input id="depth" type="checkbox" disabled></td><td></td></tr>
            <tr><th>投影モード</th><td>正投影</td><td></td></tr>
            <tr><th>目の高さ</th><td>27178.4</td><td></td></tr>
            <tr><th>対象の高さ</th><td>1650.0</td><td></td></tr>
            <tr class="off"><th>カメラ位置</th><td>調整</td><td></td></tr>
            <tr class="section"><th colspan="2">識別情報</th><td>ˆ</td></tr>
            <tr><th>ビュー テンプレート</th><td><button>&lt;なし&gt;</button></td><td></td></tr>
          </tbody>
        </table>
        <div class="v-scroll"><span class="arrow">⌃</span><span class="thumb"></span><span class="arrow">⌄</span></div>
      </div>
      <div class="prop-footer"><a href="#">プロパティ ヘルプ</a><button disabled>適用</button></div>
    </aside>
  </main>

  <footer class="status">
    <span class="hint">選択 = クリック、次へ = [Tab]、追加 = [Ctrl]、選択解除 = [Shift]。</span>
    <svg class="icon"><use href="#i-person"/></svg>
    <select aria-label="ワークセット"><option></option></select>
    <svg class="icon"><use href="#i-pen"/></svg>
    <span class="count">:0</span>
    <svg class="icon"><use href="#i-table"/></svg>
    <svg class="icon faded"><use href="#i-family"/></svg>
    <select aria-label="デザイン オプション"><option>メイン モデル</option></select>
    <div class="status-tools">
      <svg class="icon"><use href="#i-cursorlink"/></svg>
      <svg class="icon"><use href="#i-underlayx"/></svg>
      <svg class="icon"><use href="#i-pin"/></svg>
      <svg class="icon"><use href="#i-cursorx"/></svg>
      <svg class="icon"><use href="#i-drag"/></svg>
      <svg class="icon"><use href="#i-ring"/></svg>
      <svg class="icon"><use href="#i-funnel"/></svg>
      <span>:0</span>
    </div>
  </footer>

  <nav class="taskbar">
    <button aria-label="スタート"><svg class="icon"><use href="#i-win"/></svg></button>
    <button aria-label="Cortana"><svg class="icon"><use href="#i-cortana"/></svg></button>
    <button aria-label="タスク ビュー"><svg class="icon"><use href="#i-task"/></svg></button>
    <button aria-label="エクスプローラー"><svg class="icon-mid"><use href="#i-folder"/></svg></button>
    <button class="running" aria-label="OBS"><svg class="icon-mid"><use href="#i-obs"/></svg></button>
    <button class="running" aria-label="レコーダー"><svg class="icon-mid"><use href="#i-yellow"/></svg></button>
    <button class="running active" aria-label="Revit"><svg class="icon-app"><use href="#i-revit"/></svg></button>
    <div class="tray">
      <svg class="icon"><use href="#i-up"/></svg>
      <svg class="icon"><use href="#i-dropbox"/></svg>
      <svg class="icon-mid"><use href="#i-keyboard"/></svg>
      <span>A</span>
      <svg class="icon"><use href="#i-note"/></svg>
    </div>
  </nav>

  <div class="callout">
    <span>向きを回転させる</span>
    <svg viewBox="690 100 68 60" aria-hidden="true">
      <path d="M692 107l24 15M716 122l-4-8M716 122l-9 0" fill="none" stroke="#e32020" stroke-width="1.500"/>
      <circle cx="737" cy="138" r="19" fill="none" stroke="#df1b1b" stroke-width="2"/>
    </svg>
  </div>
</div>

<h1 class="banner">３Ｄで内観を確認</h1>

</body>
</html>
```
FILE: styles.css
```css
* {
  box-sizing: border-box;
}
body {
  margin: 0;
  background: #fff;
  color: #444;
  font-family: "Noto Sans", "Noto Sans CJK JP", sans-serif;
  font-size: 7px;
  line-height: 10px;
  font-feature-settings: "palt";
}
button, select, input {
  margin: 0;
  padding: 0;
  border: 0;
  background: none;
  color: inherit;
  font: inherit;
  font-feature-settings: inherit;
}
button {
  display: flex;
  align-items: center;
  justify-content: center;
  white-space: nowrap;
}
button:disabled {
  color: #b4b4b4;
}
select {
  appearance: none;
  background: #fff url("data:image/svg+xml,%3Csvg xmlns='http://www.w3.org/2000/svg' width='6' height='4'%3E%3Cpath d='M1 0l2 2 2-2' fill='none' stroke='%23999'/%3E%3C/svg%3E") right 3px center no-repeat;
}
.defs {
  display: none;
}
.icon {
  width: 11px;
  height: 11px;
  flex: none;
}
.icon-mid {
  width: 14px;
  height: 14px;
  flex: none;
}
.icon-app {
  width: 16px;
  height: 16px;
  flex: none;
}
.icon-big {
  width: 20px;
  height: 20px;
  flex: none;
}
.faded {
  opacity: 0.35;
}
.caret {
  display: inline-block;
  width: 4px;
  height: 2px;
  margin: 0 2px;
  border: solid transparent;
  border-width: 2px 2px 0;
  border-top-color: #444;
  flex: none;
}
.caret.dim {
  border-top-color: #aaa;
}
.caret.lined {
  width: 6px;
  height: 3px;
  margin: 3px 1px 0;
  border-width: 3px 3px 0;
  box-shadow: 0 -2px 0 -1px #444;
}
.close {
  color: #222;
  font-size: 9px;
  font-weight: bold;
}

/* frame */
.app {
  position: relative;
  display: flex;
  flex-direction: column;
  min-height: 100vh;
  margin: 0 81px 0 80px;
  background: #f0f0f0;
}
.quick-bar {
  display: flex;
  align-items: center;
  height: 18px;
  padding-left: 1px;
  background: #cacaca;
}
.quick-bar button {
  width: 14px;
}
.gap-small {
  width: 4px;
}
.bar-sep {
  width: 8px;
  height: 10px;
  background: linear-gradient(#b4b4b4, #b4b4b4) center / 1px 100% no-repeat;
}
.app-title {
  margin-left: 74px;
  color: #555;
  white-space: nowrap;
}
.wallpaper {
  align-self: flex-start;
  width: 226px;
  height: 16px;
  margin-left: auto;
  background: linear-gradient(170deg, #5fb3cc, #7cc3d6 30%, #62b0c9 60%, #8bcbdb);
}
.tabs {
  display: flex;
  height: 14px;
  padding-left: 1px;
  background: #c8c8c8;
  color: #666;
}
.tabs button {
  padding: 0 7px;
}
.tabs .wide {
  padding: 0 5px;
}
.tabs .file {
  width: 28px;
  padding: 0;
  margin-right: 6px;
  background: #1b74b3;
  color: #fff;
}
.tabs .active {
  background: #f0f0f0;
}
.tabs .panel-mode {
  margin-left: 6px;
}
.mode-box {
  width: 9px;
  height: 6px;
  border: 1px solid #777;
  border-radius: 2px;
  background: radial-gradient(#555 1px, #eee 2px);
}

/* ribbon */
.ribbon {
  display: flex;
  height: 60px;
  border-bottom: 1px solid #ddd;
  color: #666;
}
.group {
  display: flex;
  flex-direction: column;
  border-right: 1px solid #dadada;
}
.group-body {
  display: flex;
  height: 47px;
  padding-top: 2px;
}
.group-label {
  display: flex;
  align-items: center;
  justify-content: center;
  height: 12px;
}
.big {
  flex-direction: column;
  justify-content: flex-start;
  position: relative;
  gap: 2px;
  line-height: 9px;
}
.stack {
  display: grid;
  grid-auto-rows: 15px;
}
.stack button {
  justify-content: flex-start;
  gap: 3px;
}
.stack .caret {
  margin: 0;
}
.corner {
  position: absolute;
  right: -5px;
  bottom: 10px;
}
.select-group {
  width: 33px;
}
.select-group .group-body {
  padding: 1px 4px;
}
.modify {
  width: 25px;
  height: 46px;
  padding-top: 5px;
  gap: 7px;
  border: 1px solid #8eb6dc;
  background: #c2dcf3;
}
.cursor {
  width: 10px;
  height: 13px;
}
.graphics-group {
  width: 200px;
}
.graphics-group .group-body {
  display: grid;
  grid-template-columns: 44px 77px 74px;
  padding-left: 4px;
}
.graphics-group .big, .window-group .big {
  padding-top: 2px;
}
.graphics-group .corner {
  right: -1px;
}
.graphics-group .group-label {
  position: relative;
}
.launcher {
  position: absolute;
  right: 1px;
}
.present-group {
  width: 90px;
  padding-left: 4px;
}
.create-group {
  width: 281px;
}
.create-group .group-body {
  display: grid;
  grid-template-columns: 32px 26px 43px 51px 64px 64px;
}
.lit {
  padding: 0 3px;
  border: 1px solid #ddd;
  background: #fff;
}
.create-group .corner {
  right: 0;
}
.sheet-group {
  width: 61px;
}
.sheet-group .group-body {
  display: grid;
  grid-template: repeat(3, 15px) / repeat(3, 16px);
  padding-left: 4px;
}
.sheet-group .viewport {
  width: 24px;
}
.window-group {
  flex: 1;
}
.window-group .group-body {
  display: grid;
  grid-template-columns: 42px 48px 22px 26px 1fr;
  padding-left: 2px;
}
.window-group .split {
  margin-left: 4px;
  border-left: 1px solid #d8d8d8;
}
.window-group .split .corner {
  right: 0;
}
.options-bar {
  height: 18px;
  border-bottom: 2px solid #c6c6c6;
  background: #f3f3f3;
}

/* workspace */
.workspace {
  display: flex;
  flex: 1;
}
.panel-title {
  display: flex;
  align-items: center;
  justify-content: space-between;
  height: 13px;
  padding: 0 2px 0 3px;
  background: #f3f3f3;
  white-space: nowrap;
}
.browser {
  width: 123px;
  flex: none;
  border-right: 2px solid #bdbdbd;
  background: #fff;
}
.tree {
  display: grid;
  grid-template-rows: repeat(28, 1fr);
  height: 302px;
  margin: 0;
  padding: 0;
  list-style: none;
}
.tree li {
  display: flex;
  align-items: center;
  gap: 3px;
  background: linear-gradient(#e2e2e2, #e2e2e2) 7px 0 / 1px 100% no-repeat;
}
.tree button {
  width: 7px;
  height: 7px;
  border: 1px solid #cfd4e4;
  background: #f2f4fa;
  color: #223;
  line-height: 5px;
}
.tree .top {
  padding-left: 4px;
}
.tree .leaf {
  padding-left: 14px;
}
.tree .l1 {
  padding-left: 16px;
  gap: 6px;
}
.tree .l2 {
  padding-left: 28px;
  gap: 6px;
}
.tree .l3 {
  padding-left: 54px;
}
.tree .l1, .tree .l2 {
  background-image: linear-gradient(#e2e2e2, #e2e2e2), linear-gradient(#e2e2e2, #e2e2e2);
  background-position: 7px 0, 19px 0;
}
.tree .l3 {
  background-image: linear-gradient(#e2e2e2, #e2e2e2), linear-gradient(#e2e2e2, #e2e2e2), linear-gradient(#e2e2e2, #e2e2e2), linear-gradient(#e2e2e2, #e2e2e2);
  background-position: 7px 0, 19px 0, 31px 0, 45px 50%;
  background-size: 1px 100%, 1px 100%, 1px 100%, 6px 1px;
}
.current {
  background: #e0e0e0;
}
.viewer {
  display: flex;
  flex-direction: column;
  flex: 1;
  min-width: 0;
  background: #fff;
}
.view-tabs {
  display: flex;
  align-items: center;
  height: 13px;
  background: #c8c8c8;
}
.view-tabs button {
  width: 82px;
  height: 13px;
  justify-content: flex-start;
  gap: 4px;
  padding: 0 4px;
  color: #777;
}
.view-tabs .active {
  background: #fff;
  color: #333;
}
.view-tabs .close {
  margin-left: auto;
}
.view-tabs .caret {
  margin: 3px 4px 0 auto;
}
.canvas-row {
  display: flex;
  flex: 1;
  min-height: 0;
}
.drawing {
  flex: 1;
  min-width: 0;
}
.cube-face {
  fill: #223;
  font-size: 16px;
  text-anchor: middle;
}
.compass {
  fill: #777;
  font-size: 10px;
  font-weight: bold;
  text-anchor: middle;
}
.v-scroll {
  display: flex;
  flex-direction: column;
  align-items: center;
  justify-content: flex-end;
  width: 10px;
  background: #f0f0f0;
}
.v-scroll .thumb {
  width: 9px;
  height: 10px;
  margin: auto 0;
  background: #c8c8c8;
}
.arrow {
  width: 10px;
  color: #444;
  text-align: center;
}
.view-bar {
  display: flex;
  align-items: center;
  height: 12px;
  padding-left: 11px;
  background: #f0f0f0;
}
.view-bar button {
  flex: 0 0 14px;
}
.view-bar .scale {
  flex-basis: 44px;
  padding-right: 8px;
}
.h-scroll {
  display: flex;
  flex: 1;
}
.h-scroll .thumb {
  width: 11px;
  height: 10px;
  margin: auto;
  background: #c8c8c8;
}

/* properties */
.properties {
  display: flex;
  flex-direction: column;
  width: 181px;
  flex: none;
  border-left: 2px solid #ccc;
}
.type-picker {
  height: 46px;
  border-top: 1px solid #ddd;
  border-bottom: 1px solid #777;
}
.preview {
  display: flex;
  align-items: center;
  justify-content: center;
  width: 42px;
  height: 41px;
  margin-left: 2px;
  border: 1px solid #ddd;
  background: #f4f4f4;
}
.preview svg {
  width: 20px;
  height: 20px;
}
.type-name {
  flex: 1;
  margin-left: 3px;
  text-align: left;
}
.instance-row {
  display: flex;
  height: 13px;
  align-items: stretch;
}
.instance-row select {
  flex: 1;
  padding: 0 3px;
  background-color: #dcdcdc;
}
.instance-row button {
  width: 43px;
  gap: 1px;
}
.instance-row .icon {
  width: 7px;
}
.prop-scroll {
  display: flex;
  flex: 1;
}
table {
  flex: 1;
  border-collapse: collapse;
  table-layout: fixed;
  background: #fff;
  color: #444;
}
th, td {
  height: 12px;
  padding: 0 1px;
  border: solid #e2e2e2;
  border-width: 0 1px 1px 0;
  font-weight: normal;
  line-height: 10px;
  text-align: left;
  white-space: nowrap;
}
th {
  width: 83px;
  padding: 0 0 0 4px;
}
td:last-child {
  width: 7px;
  border-right: 0;
}
.section th, .section td {
  padding-left: 1px;
  border-color: #d9d9d9;
  background: #d9d9d9;
}
.off {
  color: #999;
}
td input[type="text"] {
  display: block;
  width: 100%;
  height: 11px;
  padding: 0 1px;
  border: 1px solid #aaa;
  background: #fff;
}
td input[type="checkbox"] {
  display: block;
  width: 8px;
  height: 8px;
  appearance: none;
  border: 1px solid #777;
}
td input:disabled {
  border-color: #ccc;
}
td button {
  width: 100%;
  height: 11px;
  border: 1px solid #c4c4c4;
  background: #dedede;
  color: #555;
}
.prop-scroll .v-scroll {
  width: 11px;
  justify-content: space-between;
}
.prop-scroll .thumb {
  flex: 0 0 74%;
  width: 10px;
  margin: 0 0 auto;
}
.prop-footer {
  display: flex;
  justify-content: space-between;
  height: 16px;
  padding-left: 1px;
}
.prop-footer a {
  color: #2878b8;
}
.prop-footer button {
  width: 51px;
  height: 13px;
  background: #c6c6c6;
  color: #999;
}

/* status and task bars */
.status {
  display: flex;
  align-items: center;
  height: 16px;
  padding: 0 14px 0 2px;
  background: #c9c9c9;
}
.hint {
  width: 284px;
  white-space: nowrap;
}
.status > select {
  width: 129px;
  height: 11px;
  margin: 0 2px 0 3px;
  padding: 0 2px;
  color: #888;
}
.count {
  width: 14px;
}
.status > .icon + .icon {
  margin-left: 2px;
}
.status-tools {
  display: flex;
  align-items: center;
  gap: 3px;
  margin-left: auto;
}
.taskbar {
  display: flex;
  align-items: center;
  height: 26px;
  background: #04151c;
}
.taskbar button {
  width: 31px;
  height: 26px;
}
.taskbar .running {
  border-bottom: 2px solid #7fc4dd;
}
.taskbar .active {
  background: #35444b;
}
.tray {
  display: flex;
  align-items: center;
  gap: 9px;
  height: 26px;
  margin-left: auto;
  padding-right: 14px;
  border-right: 1px solid #45535a;
  color: #fff;
  font-size: 12px;
}

/* overlays */
.callout {
  position: absolute;
  top: 92px;
  left: 349px;
  display: flex;
  color: #e81717;
  font-size: 32px;
  font-weight: bold;
  line-height: 30px;
  white-space: nowrap;
  font-feature-settings: normal;
  pointer-events: none;
}
.callout svg {
  width: 68px;
  height: 60px;
  margin: 8px 0 0 5px;
}
.banner {
  position: absolute;
  top: 0;
  right: 0;
  width: 224px;
  height: 33px;
  margin: 0;
  background: #324797;
  color: #fff;
  font-size: 22px;
  font-weight: normal;
  line-height: 32px;
  text-align: center;
  font-feature-settings: normal;
}
```
